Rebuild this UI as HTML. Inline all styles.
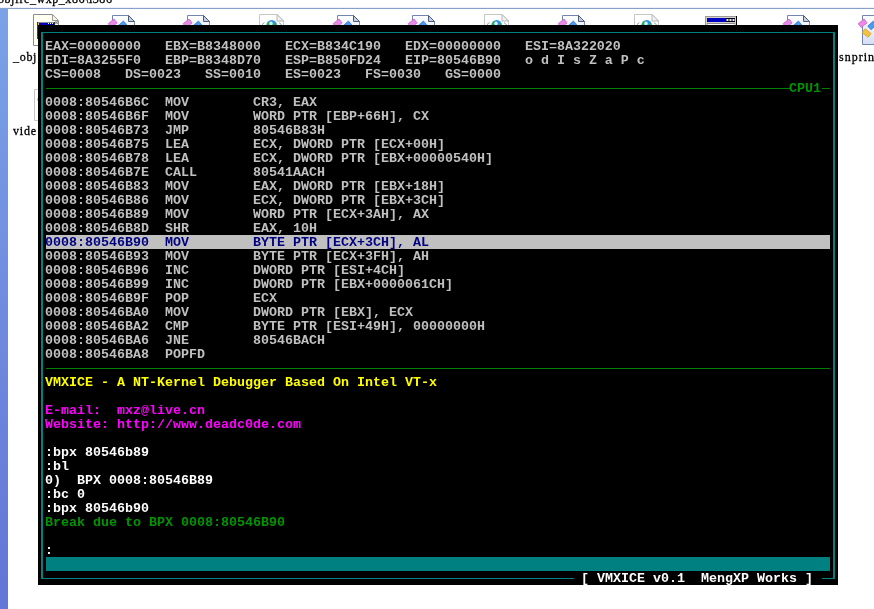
<!DOCTYPE html>
<html><head><meta charset="utf-8"><title>VMXICE</title>
<style>
html,body{margin:0;padding:0}
body{width:874px;height:609px;background:#fff;position:relative;overflow:hidden;font-family:"Liberation Mono","DejaVu Sans Mono",monospace}
.strip{position:absolute;left:0;top:9px;width:8px;height:600px;background:linear-gradient(#7ba2e7,#6375d6)}
.topline{position:absolute;left:0;top:8px;width:874px;height:1px;background:#83a1ca;box-shadow:0 -1px 0 #eef2f8}
.path{will-change:transform;position:absolute;left:-2px;top:-7px;font:12px/12px "Liberation Serif",serif;color:#000;white-space:pre;-webkit-text-stroke:.3px #000;font-variant-ligatures:none;font-kerning:none}
.lbl{will-change:transform;position:absolute;font:12px/12px "Liberation Serif",serif;color:#000;white-space:pre;-webkit-text-stroke:.3px #000;font-variant-ligatures:none;font-kerning:none}
.ic{position:absolute}
.con{position:absolute;left:38px;top:25px;width:800px;height:560px;background:#000;overflow:hidden}
.frame{position:absolute;left:3px;top:7px;width:790px;height:545px;border:solid #008080;border-width:1px 2px}
.r{position:absolute;left:8px;height:13px;padding-top:1px;text-indent:-1px;font:bold 13.33px/14px "Liberation Mono","DejaVu Sans Mono",monospace;white-space:pre;color:#c0c0c0}
.g{color:#c0c0c0} .w{color:#ffffff} .y{color:#ffff00} .m{color:#ff00ff} .gr{color:#009400}
.hl{color:#000080;background:#c0c0c0;width:784px}
.txt{position:absolute;left:0;top:0;width:800px;height:560px;will-change:transform}
.ln{position:absolute;left:8px;height:1px;background:#008000}
.bar{position:absolute;left:8px;top:532px;width:784px;height:14px;background:#008080}
.cpu{left:752px;top:56px;width:40px;background:#000;color:#009400}
.cpu i{position:absolute;left:32px;top:7px;width:8px;height:1px;background:#008000}
.foot{left:536px;top:546px;width:248px;background:#000;color:#ffffff}
</style></head><body>
<div class="path" style="letter-spacing:.55px">objfre_wxp_x86\i386</div>
<svg width="0" height="0" style="position:absolute"><defs><linearGradient id="pg" x1="0" y1="0" x2="0" y2="1"><stop offset="0" stop-color="#fff"/><stop offset="1" stop-color="#d5def2"/></linearGradient></defs></svg>
<div class="topline"></div>
<div class="strip"></div>
<svg class="ic" style="left:33px;top:13px" width="28" height="36" viewBox="0 0 28 36">
<path d="M.5 1.5h19l6 6v25h-25z" fill="#fffff2" stroke="#8c8c8c" stroke-width="1"/>
<path d="M19.5 1.5v6h6z" fill="#f6f6e2" stroke="#9a9a9a" stroke-width="1"/>
<rect x="22" y="8" width="3" height="3" fill="#a8a8a8"/>
<rect x="4" y="9" width="18" height="1" fill="#7c8aa2"/>
<rect x="4" y="9" width="1" height="17" fill="#3c3c48"/>
<rect x="5" y="10" width="16" height="3" fill="#0000b4"/>
<rect x="5" y="10" width="1" height="2" fill="#f4b424"/>
<rect x="15" y="10" width="1" height="1" fill="#fff"/><rect x="17" y="10" width="1" height="1" fill="#fff"/><rect x="19" y="10" width="1" height="1" fill="#fff"/>
<rect x="21" y="9" width="1" height="6" fill="#303030"/>
</svg><svg class="ic" style="left:106px;top:14px" width="32" height="34" viewBox="0 0 32 34">
<path d="M6.5 1.5h16l6 6v23h-22z" fill="url(#pg)" stroke="#7486ad" stroke-width="1"/>
<path d="M22.5 1.5v6h6z" fill="#c3cde3" stroke="#4d5b7c" stroke-width="1"/>
<rect x="-3.8" y="-2.45" width="7.6" height="4.9" transform="translate(6.6 9.3) rotate(-38)" fill="#e88ae6" stroke="#c95fc9" stroke-width=".7"/>
<rect x="-3.8" y="-2.45" width="7.6" height="4.9" transform="translate(16.2 11.4) rotate(-42)" fill="#4d9bf0" stroke="#2f74cf" stroke-width=".7"/>
<rect x="-3.8" y="-2.45" width="7.6" height="4.9" transform="translate(10.6 19) rotate(40)" fill="#f3c43f" stroke="#d39a1c" stroke-width=".7"/>
</svg><svg class="ic" style="left:181px;top:14px" width="32" height="34" viewBox="0 0 32 34">
<path d="M6.5 1.5h16l6 6v23h-22z" fill="url(#pg)" stroke="#7486ad" stroke-width="1"/>
<path d="M22.5 1.5v6h6z" fill="#c3cde3" stroke="#4d5b7c" stroke-width="1"/>
<rect x="-3.8" y="-2.45" width="7.6" height="4.9" transform="translate(6.6 9.3) rotate(-38)" fill="#e88ae6" stroke="#c95fc9" stroke-width=".7"/>
<rect x="-3.8" y="-2.45" width="7.6" height="4.9" transform="translate(16.2 11.4) rotate(-42)" fill="#4d9bf0" stroke="#2f74cf" stroke-width=".7"/>
<rect x="-3.8" y="-2.45" width="7.6" height="4.9" transform="translate(10.6 19) rotate(40)" fill="#f3c43f" stroke="#d39a1c" stroke-width=".7"/>
</svg><svg class="ic" style="left:331px;top:14px" width="32" height="34" viewBox="0 0 32 34">
<path d="M6.5 1.5h16l6 6v23h-22z" fill="url(#pg)" stroke="#7486ad" stroke-width="1"/>
<path d="M22.5 1.5v6h6z" fill="#c3cde3" stroke="#4d5b7c" stroke-width="1"/>
<rect x="-3.8" y="-2.45" width="7.6" height="4.9" transform="translate(6.6 9.3) rotate(-38)" fill="#e88ae6" stroke="#c95fc9" stroke-width=".7"/>
<rect x="-3.8" y="-2.45" width="7.6" height="4.9" transform="translate(16.2 11.4) rotate(-42)" fill="#4d9bf0" stroke="#2f74cf" stroke-width=".7"/>
<rect x="-3.8" y="-2.45" width="7.6" height="4.9" transform="translate(10.6 19) rotate(40)" fill="#f3c43f" stroke="#d39a1c" stroke-width=".7"/>
</svg><svg class="ic" style="left:406px;top:14px" width="32" height="34" viewBox="0 0 32 34">
<path d="M6.5 1.5h16l6 6v23h-22z" fill="url(#pg)" stroke="#7486ad" stroke-width="1"/>
<path d="M22.5 1.5v6h6z" fill="#c3cde3" stroke="#4d5b7c" stroke-width="1"/>
<rect x="-3.8" y="-2.45" width="7.6" height="4.9" transform="translate(6.6 9.3) rotate(-38)" fill="#e88ae6" stroke="#c95fc9" stroke-width=".7"/>
<rect x="-3.8" y="-2.45" width="7.6" height="4.9" transform="translate(16.2 11.4) rotate(-42)" fill="#4d9bf0" stroke="#2f74cf" stroke-width=".7"/>
<rect x="-3.8" y="-2.45" width="7.6" height="4.9" transform="translate(10.6 19) rotate(40)" fill="#f3c43f" stroke="#d39a1c" stroke-width=".7"/>
</svg><svg class="ic" style="left:556px;top:14px" width="32" height="34" viewBox="0 0 32 34">
<path d="M6.5 1.5h16l6 6v23h-22z" fill="url(#pg)" stroke="#7486ad" stroke-width="1"/>
<path d="M22.5 1.5v6h6z" fill="#c3cde3" stroke="#4d5b7c" stroke-width="1"/>
<rect x="-3.8" y="-2.45" width="7.6" height="4.9" transform="translate(6.6 9.3) rotate(-38)" fill="#e88ae6" stroke="#c95fc9" stroke-width=".7"/>
<rect x="-3.8" y="-2.45" width="7.6" height="4.9" transform="translate(16.2 11.4) rotate(-42)" fill="#4d9bf0" stroke="#2f74cf" stroke-width=".7"/>
<rect x="-3.8" y="-2.45" width="7.6" height="4.9" transform="translate(10.6 19) rotate(40)" fill="#f3c43f" stroke="#d39a1c" stroke-width=".7"/>
</svg><svg class="ic" style="left:781px;top:14px" width="32" height="34" viewBox="0 0 32 34">
<path d="M6.5 1.5h16l6 6v23h-22z" fill="url(#pg)" stroke="#7486ad" stroke-width="1"/>
<path d="M22.5 1.5v6h6z" fill="#c3cde3" stroke="#4d5b7c" stroke-width="1"/>
<rect x="-3.8" y="-2.45" width="7.6" height="4.9" transform="translate(6.6 9.3) rotate(-38)" fill="#e88ae6" stroke="#c95fc9" stroke-width=".7"/>
<rect x="-3.8" y="-2.45" width="7.6" height="4.9" transform="translate(16.2 11.4) rotate(-42)" fill="#4d9bf0" stroke="#2f74cf" stroke-width=".7"/>
<rect x="-3.8" y="-2.45" width="7.6" height="4.9" transform="translate(10.6 19) rotate(40)" fill="#f3c43f" stroke="#d39a1c" stroke-width=".7"/>
</svg><svg class="ic" style="left:856px;top:14px" width="32" height="34" viewBox="0 0 32 34">
<path d="M6.5 1.5h16l6 6v23h-22z" fill="url(#pg)" stroke="#7486ad" stroke-width="1"/>
<path d="M22.5 1.5v6h6z" fill="#c3cde3" stroke="#4d5b7c" stroke-width="1"/>
<rect x="-3.8" y="-2.45" width="7.6" height="4.9" transform="translate(6.6 9.3) rotate(-38)" fill="#e88ae6" stroke="#c95fc9" stroke-width=".7"/>
<rect x="-3.8" y="-2.45" width="7.6" height="4.9" transform="translate(16.2 11.4) rotate(-42)" fill="#4d9bf0" stroke="#2f74cf" stroke-width=".7"/>
<rect x="-3.8" y="-2.45" width="7.6" height="4.9" transform="translate(10.6 19) rotate(40)" fill="#f3c43f" stroke="#d39a1c" stroke-width=".7"/>
</svg><svg class="ic" style="left:258px;top:13px" width="32" height="34" viewBox="0 0 32 34">
<path d="M1.5 1.5h17.5l6.5 6.5v24.5h-24z" fill="#fff" stroke="#c6c6c6" stroke-width="1"/>
<path d="M19 1.5v6.5h6.5z" fill="#f4f4f4" stroke="#b4b4b4" stroke-width="1"/>
<circle cx="13.7" cy="12.3" r="5.3" fill="#2f8fe8"/>
<path d="M8.6 11.5q1-3 3.4-3.6q.6 2-.4 3.6q-1.4 1.6-3 0z" fill="#22b93a"/>
<path d="M16.4 9.6q2 .8 2.4 3l-2.2 1.2q-1.2-2-.2-4.2z" fill="#22b93a"/>
<ellipse cx="13" cy="10.6" rx="1.7" ry="2.2" fill="#d8f2ff"/>
<path d="M6.4 9.6l-2.4 1.9 2.4 1.9M21 9.6l2.4 1.9-2.4 1.9" fill="none" stroke="#9a9aa8" stroke-width="1"/>
</svg><svg class="ic" style="left:483px;top:13px" width="32" height="34" viewBox="0 0 32 34">
<path d="M1.5 1.5h17.5l6.5 6.5v24.5h-24z" fill="#fff" stroke="#c6c6c6" stroke-width="1"/>
<path d="M19 1.5v6.5h6.5z" fill="#f4f4f4" stroke="#b4b4b4" stroke-width="1"/>
<circle cx="13.7" cy="12.3" r="5.3" fill="#2f8fe8"/>
<path d="M8.6 11.5q1-3 3.4-3.6q.6 2-.4 3.6q-1.4 1.6-3 0z" fill="#22b93a"/>
<path d="M16.4 9.6q2 .8 2.4 3l-2.2 1.2q-1.2-2-.2-4.2z" fill="#22b93a"/>
<ellipse cx="13" cy="10.6" rx="1.7" ry="2.2" fill="#d8f2ff"/>
<path d="M6.4 9.6l-2.4 1.9 2.4 1.9M21 9.6l2.4 1.9-2.4 1.9" fill="none" stroke="#9a9aa8" stroke-width="1"/>
</svg><svg class="ic" style="left:633px;top:13px" width="32" height="34" viewBox="0 0 32 34">
<path d="M1.5 1.5h17.5l6.5 6.5v24.5h-24z" fill="#fff" stroke="#c6c6c6" stroke-width="1"/>
<path d="M19 1.5v6.5h6.5z" fill="#f4f4f4" stroke="#b4b4b4" stroke-width="1"/>
<circle cx="13.7" cy="12.3" r="5.3" fill="#2f8fe8"/>
<path d="M8.6 11.5q1-3 3.4-3.6q.6 2-.4 3.6q-1.4 1.6-3 0z" fill="#22b93a"/>
<path d="M16.4 9.6q2 .8 2.4 3l-2.2 1.2q-1.2-2-.2-4.2z" fill="#22b93a"/>
<ellipse cx="13" cy="10.6" rx="1.7" ry="2.2" fill="#d8f2ff"/>
<path d="M6.4 9.6l-2.4 1.9 2.4 1.9M21 9.6l2.4 1.9-2.4 1.9" fill="none" stroke="#9a9aa8" stroke-width="1"/>
</svg><svg class="ic" style="left:33px;top:88px" width="32" height="34" viewBox="0 0 32 34">
<path d="M1.5 1.5h17.5l6.5 6.5v24.5h-24z" fill="#fff" stroke="#c6c6c6" stroke-width="1"/>
<path d="M19 1.5v6.5h6.5z" fill="#f4f4f4" stroke="#b4b4b4" stroke-width="1"/>
<circle cx="13.7" cy="12.3" r="5.3" fill="#2f8fe8"/>
<path d="M8.6 11.5q1-3 3.4-3.6q.6 2-.4 3.6q-1.4 1.6-3 0z" fill="#22b93a"/>
<path d="M16.4 9.6q2 .8 2.4 3l-2.2 1.2q-1.2-2-.2-4.2z" fill="#22b93a"/>
<ellipse cx="13" cy="10.6" rx="1.7" ry="2.2" fill="#d8f2ff"/>
<path d="M6.4 9.6l-2.4 1.9 2.4 1.9M21 9.6l2.4 1.9-2.4 1.9" fill="none" stroke="#9a9aa8" stroke-width="1"/>
</svg><svg class="ic" style="left:705px;top:16px" width="33" height="28" viewBox="0 0 33 28">
<rect x="0" y="0" width="32" height="26" fill="#d4d0c8"/>
<rect x="0" y="0" width="32" height="1" fill="#9a9a9a"/><rect x="0" y="0" width="1" height="26" fill="#9a9a9a"/>
<rect x="31" y="0" width="1" height="26" fill="#000"/>
<rect x="2" y="2" width="28" height="4" fill="#0000c4"/>
<rect x="21" y="2" width="9" height="4" fill="#000020"/>
<rect x="21.5" y="3" width="2" height="2" fill="#ecece0"/><rect x="24.5" y="3" width="2" height="2" fill="#ecece0"/><rect x="27.5" y="3" width="2" height="2" fill="#ecece0"/>
<rect x="2" y="7" width="28" height="1" fill="#8c8c8c"/><rect x="3" y="8" width="26" height="16" fill="#fff"/>
</svg>
<div class="lbl" style="left:13px;top:51px;letter-spacing:.7px">_obj</div>
<div class="lbl" style="left:13px;top:125px;letter-spacing:.8px">vide</div>
<div class="lbl" style="left:839px;top:51px;letter-spacing:1px">snprin</div>
<div class="con">
<div class="frame"></div>
<div class="ln" style="top:63px;width:784px"></div>
<div class="ln" style="top:343px;width:784px"></div>
<div class="bar"></div>
<div class="txt">
<div class="r g" style="top:14px">EAX=00000000   EBX=B8348000   ECX=B834C190   EDX=00000000   ESI=8A322020</div>
<div class="r g" style="top:28px">EDI=8A3255F0   EBP=B8348D70   ESP=B850FD24   EIP=80546B90   o d I s Z a P c</div>
<div class="r g" style="top:42px">CS=0008   DS=0023   SS=0010   ES=0023   FS=0030   GS=0000</div>
<div class="r g" style="top:70px">0008:80546B6C  MOV        CR3, EAX</div>
<div class="r g" style="top:84px">0008:80546B6F  MOV        WORD PTR [EBP+66H], CX</div>
<div class="r g" style="top:98px">0008:80546B73  JMP        80546B83H</div>
<div class="r g" style="top:112px">0008:80546B75  LEA        ECX, DWORD PTR [ECX+00H]</div>
<div class="r g" style="top:126px">0008:80546B78  LEA        ECX, DWORD PTR [EBX+00000540H]</div>
<div class="r g" style="top:140px">0008:80546B7E  CALL       80541AACH</div>
<div class="r g" style="top:154px">0008:80546B83  MOV        EAX, DWORD PTR [EBX+18H]</div>
<div class="r g" style="top:168px">0008:80546B86  MOV        ECX, DWORD PTR [EBX+3CH]</div>
<div class="r g" style="top:182px">0008:80546B89  MOV        WORD PTR [ECX+3AH], AX</div>
<div class="r g" style="top:196px">0008:80546B8D  SHR        EAX, 10H</div>
<div class="r hl" style="top:210px">0008:80546B90  MOV        BYTE PTR [ECX+3CH], AL</div>
<div class="r g" style="top:224px">0008:80546B93  MOV        BYTE PTR [ECX+3FH], AH</div>
<div class="r g" style="top:238px">0008:80546B96  INC        DWORD PTR [ESI+4CH]</div>
<div class="r g" style="top:252px">0008:80546B99  INC        DWORD PTR [EBX+0000061CH]</div>
<div class="r g" style="top:266px">0008:80546B9F  POP        ECX</div>
<div class="r g" style="top:280px">0008:80546BA0  MOV        DWORD PTR [EBX], ECX</div>
<div class="r g" style="top:294px">0008:80546BA2  CMP        BYTE PTR [ESI+49H], 00000000H</div>
<div class="r g" style="top:308px">0008:80546BA6  JNE        80546BACH</div>
<div class="r g" style="top:322px">0008:80546BA8  POPFD</div>
<div class="r y" style="top:350px">VMXICE - A NT-Kernel Debugger Based On Intel VT-x</div>
<div class="r m" style="top:378px">E-mail:  mxz@live.cn</div>
<div class="r m" style="top:392px">Website: http://www.deadc0de.com</div>
<div class="r w" style="top:420px">:bpx 80546b89</div>
<div class="r w" style="top:434px">:bl</div>
<div class="r w" style="top:448px">0)  BPX 0008:80546B89</div>
<div class="r w" style="top:462px">:bc 0</div>
<div class="r w" style="top:476px">:bpx 80546b90</div>
<div class="r gr" style="top:490px">Break due to BPX 0008:80546B90</div>
<div class="r w" style="top:518px">:</div>
<div class="r cpu">CPU1<i></i></div>
<div class="r foot"> [ VMXICE v0.1  MengXP Works ] </div>
</div>
</div>
</body></html>
